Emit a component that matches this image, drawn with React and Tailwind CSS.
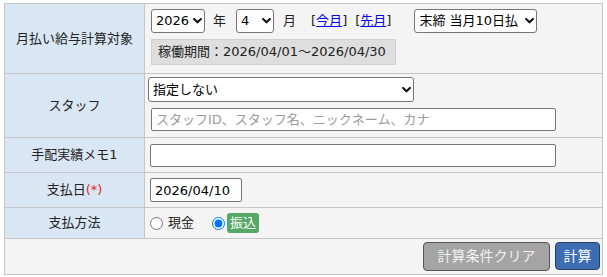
import { useState } from 'react';

const Chevron = () => (
    <svg className="pointer-events-none absolute right-[3px] top-1/2 -translate-y-1/2" width="9" height="7" viewBox="0 0 9 7" fill="none">
        <path d="M1.1 1.4L4.5 4.8 7.9 1.4" stroke="#111" strokeWidth="2.1" strokeLinecap="round" strokeLinejoin="round" />
    </svg>
);

const Select = ({ value, options, className }) => (
    <div className={`relative ${className}`}>
        <select
            defaultValue={value}
            className="h-full w-full appearance-none rounded-[3px] border border-[#767676] bg-white pl-[4px] pr-[14px] text-[13px] text-black outline-none"
        >
            {options.map((o) => (
                <option key={o}>{o}</option>
            ))}
        </select>
        <Chevron />
    </div>
);

const Label = ({ children }) => (
    <td className="w-[140px] border border-[#c6c6c6] bg-[#d9e7f4] text-center align-middle text-[13px] text-[#222]">
        {children}
    </td>
);

const App = () => {
    const [method, setMethod] = useState('transfer');

    return (
        <div className="h-[277px] w-[607px] bg-white pl-[4px] pt-[3px]" style={{ fontFamily: '"DejaVu Sans", "Noto Sans CJK JP", sans-serif' }}>
            <table className="w-[599px] border-collapse border border-[#c6c6c6]">
                <tbody>
                    {/* 対象月 */}
                    <tr className="h-[70px]">
                        <Label>月払い給与計算対象</Label>
                        <td className="border border-[#c6c6c6] bg-[#f4f4f4] pl-[6px] align-top">
                            <div className="mt-[5px] flex items-center text-[13px] text-[#222]">
                                <Select value="2026" options={['2025', '2026', '2027']} className="h-[24px] w-[54px]" />
                                <span className="ml-[8px]">年</span>
                                <Select value="4" options={['1', '2', '3', '4', '5', '6', '7', '8', '9', '10', '11', '12']} className="ml-[10px] h-[24px] w-[38px]" />
                                <span className="ml-[9px]">月</span>
                                <span className="ml-[15px]">[<a href="#" className="text-[#0000ee] underline">今月</a>]</span>
                                <span className="ml-[8px]">[<a href="#" className="text-[#0000ee] underline">先月</a>]</span>
                                <Select value="末締 当月10日払" options={['末締 当月10日払', '末締 翌月10日払']} className="ml-[23px] h-[24px] w-[123px]" />
                            </div>
                            <div className="mt-[6px] flex h-[26px] w-[245px] items-center border border-[#cfcfcf] bg-[#dedede] pl-[6px] text-[13px] text-[#222]">
                                稼働期間：2026/04/01～2026/04/30
                            </div>
                        </td>
                    </tr>

                    {/* スタッフ */}
                    <tr className="h-[64px]">
                        <Label>スタッフ</Label>
                        <td className="border border-[#c6c6c6] bg-[#f4f4f4] pl-[3px] align-top">
                            <Select value="指定しない" options={['指定しない']} className="mt-[3px] h-[25px] w-[266px]" />
                            <input
                                type="text"
                                placeholder="スタッフID、スタッフ名、ニックネーム、カナ"
                                className="ml-[3px] mt-[6px] h-[23px] w-[405px] rounded-[2px] border border-[#767676] bg-white px-[4px] text-[13px] text-black outline-none placeholder:text-[#9a9a9a]"
                            />
                        </td>
                    </tr>

                    {/* メモ */}
                    <tr className="h-[35px]">
                        <Label>手配実績メモ1</Label>
                        <td className="border border-[#c6c6c6] bg-[#f4f4f4] pl-[5px] align-middle">
                            <input type="text" className="block h-[23px] w-[406px] rounded-[2px] border border-[#767676] bg-white px-[5px] text-[13px] outline-none" />
                        </td>
                    </tr>

                    {/* 支払日 */}
                    <tr className="h-[35px]">
                        <Label>
                            支払日<span className="text-[#e8262b]">(*)</span>
                        </Label>
                        <td className="border border-[#c6c6c6] bg-[#f4f4f4] pl-[5px] align-middle">
                            <input
                                type="text"
                                defaultValue="2026/04/10"
                                className="block h-[24px] w-[92px] rounded-[2px] border border-[#767676] bg-white px-[4px] text-[13px] text-black outline-none"
                            />
                        </td>
                    </tr>

                    {/* 支払方法 */}
                    <tr className="h-[31px]">
                        <Label>支払方法</Label>
                        <td className="border border-[#c6c6c6] bg-[#f4f4f4] pl-[5px] align-middle">
                            <div className="flex items-center text-[13px] text-[#222]">
                                <label className="flex items-center">
                                    <input
                                        type="radio"
                                        name="method"
                                        checked={method === 'cash'}
                                        onChange={() => setMethod('cash')}
                                        className="m-0 h-[13px] w-[13px]"
                                    />
                                    <span className="ml-[5px]">現金</span>
                                </label>
                                <label className="ml-[18px] flex items-center">
                                    <input
                                        type="radio"
                                        name="method"
                                        checked={method === 'transfer'}
                                        onChange={() => setMethod('transfer')}
                                        className="m-0 h-[13px] w-[13px]"
                                    />
                                    <span className="ml-[2px] h-[20px] rounded-[3px] bg-[#55a865] px-[3px] leading-[20px] text-white">振込</span>
                                </label>
                            </div>
                        </td>
                    </tr>

                    {/* ボタン */}
                    <tr className="h-[36px]">
                        <td colSpan={2} className="border border-[#c6c6c6] bg-[#f4f4f4] pr-[2px] align-middle">
                            <div className="flex justify-end gap-[5px]">
                                <button className="h-[29px] w-[127px] rounded-[4px] border border-[#555] bg-[#a4a4a4] text-[14px] text-[#f2f2f2]">
                                    計算条件クリア
                                </button>
                                <button className="h-[28px] w-[45px] rounded-[4px] border border-[#2a3f66] bg-[#3e6cb2] text-[14px] text-white">
                                    計算
                                </button>
                            </div>
                        </td>
                    </tr>
                </tbody>
            </table>
        </div>
    );
};

export default App;
